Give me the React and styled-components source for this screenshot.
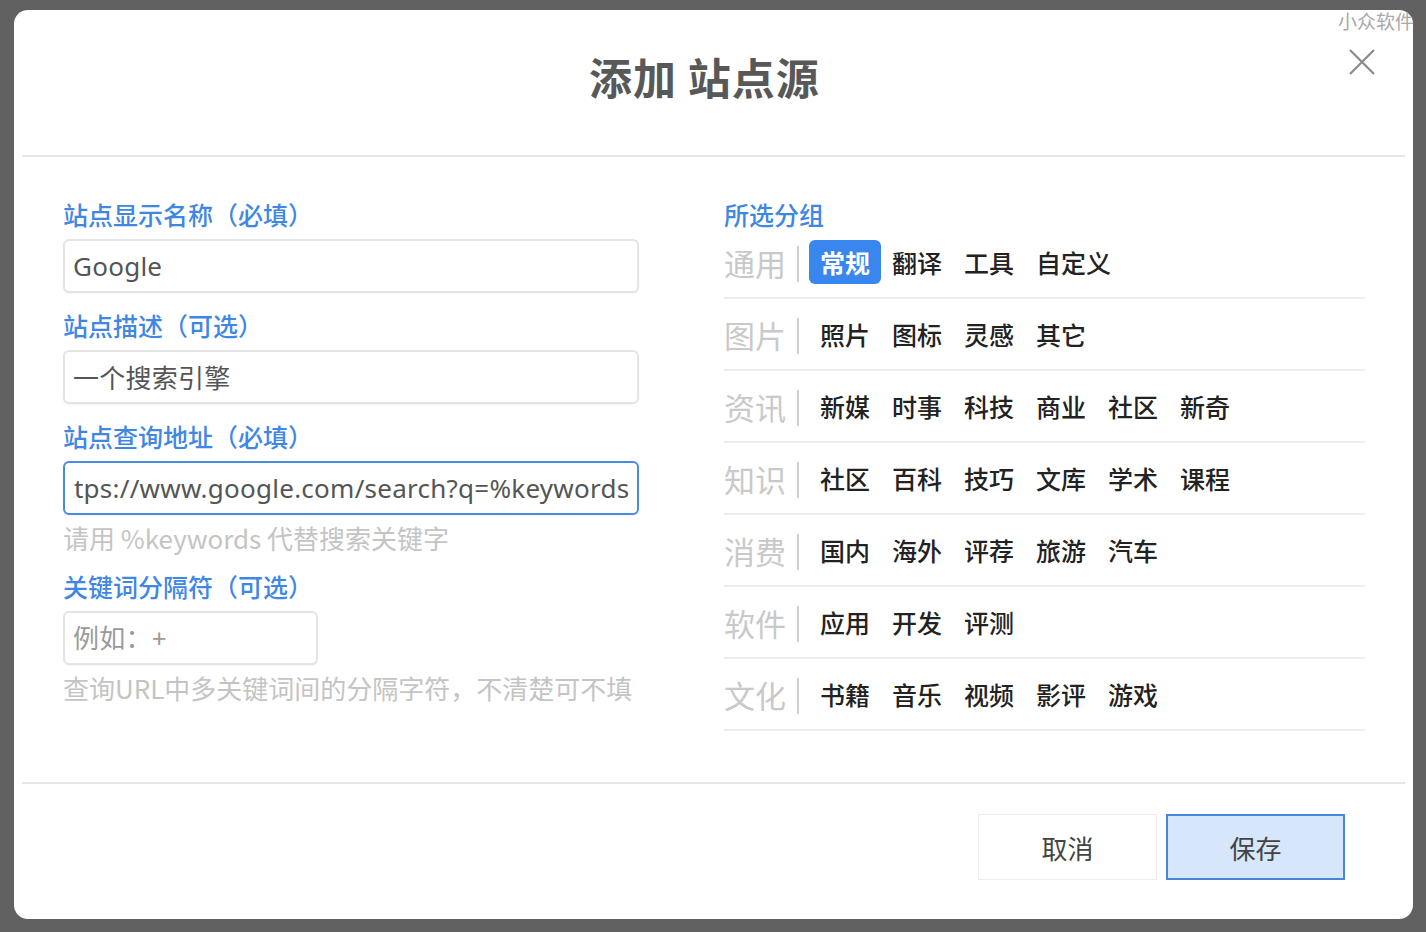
import styled, {createGlobalStyle} from "styled-components";
import {useEffect, useRef} from "react";

const GlobalStyle = createGlobalStyle`
html, body {
    margin:0;
    padding:0;
    background:#616161;
    font-family:"Noto Sans","Noto Sans CJK SC",sans-serif;
}
* { box-sizing:border-box; }
`

const Page = styled.div`
width:1426px;
height:932px;
position:relative;
overflow:hidden;
padding:10px 0 0 14px;
`
const Watermark = styled.div`
position:absolute;
top:7px;
right:12px;
font-size:19px;
color:#a9a9a9;
font-family:"Noto Sans CJK SC",sans-serif;
`
const Modal = styled.div`
position:relative;
width:1399px;
height:909px;
background:#fff;
border-radius:14px;
display:flex;
flex-direction:column;
`
const Header = styled.div`
height:147px;
margin:0 8px;
border-bottom:2px solid #e6e6e6;
display:flex;
align-items:center;
justify-content:center;
padding:0 18px 14px 0;
`
const Title = styled.h2`
margin:0;
font-size:43px;
font-weight:700;
color:#585858;
letter-spacing:1px;
font-family:"Noto Sans CJK SC",sans-serif;
`
const CloseButton = styled.button`
position:absolute;
top:38px;
right:37px;
width:28px;
height:28px;
padding:0;
border:none;
background:none;
cursor:pointer;
`
const Body = styled.div`
flex:1;
display:grid;
grid-template-columns:576px 641px;
column-gap:85px;
padding:41px 48px 0 49px;
`
const Column = styled.div`
display:flex;
flex-direction:column;
`
const Field = styled.div`
display:flex;
flex-direction:column;
margin-bottom:16px;
`
const Label = styled.label`
font-size:25px;
font-weight:500;
line-height:32px;
color:#3f87e4;
margin-bottom:9px;
font-family:"Noto Sans CJK SC",sans-serif;
`
const Input = styled.input`
width:${({$width})=>$width||"100%"};
height:54px;
border:2px solid ${({$focused})=>$focused?"#4a8ae2":"#e4e4e4"};
border-radius:6px;
padding:0 8px;
font-size:26px;
letter-spacing:0.25px;
color:#555;
font-family:"Noto Sans","Noto Sans CJK SC",sans-serif;
background:#fff;
outline:none;
box-shadow:0 1px 2px rgba(0,0,0,.04);

&::placeholder{
    color:#9a9a9a;
}
`
const Hint = styled.div`
font-size:26px;
line-height:32px;
margin-top:7px;
color:#c4c4c4;
font-family:"Noto Sans CJK SC",sans-serif;
`
const GroupLabel = styled(Label)`
line-height:26px;
margin:3px 0 0;
`
const Row = styled.div`
height:72px;
display:flex;
align-items:center;
border-bottom:2px solid #eeeeee;
`
const CategoryName = styled.span`
font-size:31px;
color:#c9c9c9;
width:64px;
font-family:"Noto Sans CJK SC",sans-serif;
`
const Bar = styled.span`
width:2px;
height:36px;
background:#cfcfcf;
margin:4px 10px 0 9px;
`
const Item = styled.span`
height:44px;
padding:0 11px;
display:flex;
align-items:center;
border-radius:6px;
font-size:25px;
color:${({$active})=>$active?"#fff":"#222"};
background:${({$active})=>$active?"#3a86ef":"transparent"};
font-weight:${({$active})=>$active?700:500};
font-family:"Noto Sans CJK SC",sans-serif;
cursor:pointer;
`
const Footer = styled.div`
height:137px;
margin:0 8px;
border-top:2px solid #e6e6e6;
display:flex;
justify-content:flex-end;
align-items:flex-start;
gap:9px;
padding:30px 60px 0 0;
`
const Button = styled.button`
width:179px;
height:66px;
font-size:26px;
color:#444;
font-family:"Noto Sans CJK SC",sans-serif;
background:${({$primary})=>$primary?"#d6e6fb":"#fff"};
border:${({$primary})=>$primary?"2px solid #4a86d8":"1px solid #ececec"};
cursor:pointer;
`

const groups = [
    {name:"通用", items:["常规","翻译","工具","自定义"]},
    {name:"图片", items:["照片","图标","灵感","其它"]},
    {name:"资讯", items:["新媒","时事","科技","商业","社区","新奇"]},
    {name:"知识", items:["社区","百科","技巧","文库","学术","课程"]},
    {name:"消费", items:["国内","海外","评荐","旅游","汽车"]},
    {name:"软件", items:["应用","开发","评测"]},
    {name:"文化", items:["书籍","音乐","视频","影评","游戏"]},
]

function CloseIcon(){
    return (
        <svg width="28" height="28" viewBox="0 0 28 28">
            <path d="M2 2 L26 26 M26 2 L2 26" stroke="#8a8a8a" strokeWidth="2.2" fill="none"/>
        </svg>
    )
}

export default function App(){
    const urlRef = useRef(null);

    useEffect(()=>{
        if (urlRef.current)
            urlRef.current.scrollLeft = urlRef.current.scrollWidth;
    },[])

    return(
        <>
        <GlobalStyle/>
        <Page>
            <Modal>
                <Header>
                    <Title>添加 站点源</Title>
                </Header>
                <CloseButton><CloseIcon/></CloseButton>
                <Body>
                    <Column>
                        <Field>
                            <Label>站点显示名称（必填）</Label>
                            <Input defaultValue="Google"/>
                        </Field>
                        <Field>
                            <Label>站点描述（可选）</Label>
                            <Input defaultValue="一个搜索引擎"/>
                        </Field>
                        <Field>
                            <Label>站点查询地址（必填）</Label>
                            <Input ref={urlRef} $focused defaultValue="https://www.google.com/search?q=%keywords"/>
                            <Hint>请用 %keywords 代替搜索关键字</Hint>
                        </Field>
                        <Field>
                            <Label>关键词分隔符（可选）</Label>
                            <Input $width="255px" placeholder="例如：+"/>
                            <Hint>查询URL中多关键词间的分隔字符，不清楚可不填</Hint>
                        </Field>
                    </Column>
                    <Column>
                        <GroupLabel>所选分组</GroupLabel>
                        {groups.map((group)=>(
                            <Row key={group.name}>
                                <CategoryName>{group.name}</CategoryName>
                                <Bar/>
                                {group.items.map((item)=>(
                                    <Item key={item} $active={item==="常规"}>{item}</Item>
                                ))}
                            </Row>
                        ))}
                    </Column>
                </Body>
                <Footer>
                    <Button>取消</Button>
                    <Button $primary>保存</Button>
                </Footer>
            </Modal>
            <Watermark>小众软件</Watermark>
        </Page>
        </>
    )
}
